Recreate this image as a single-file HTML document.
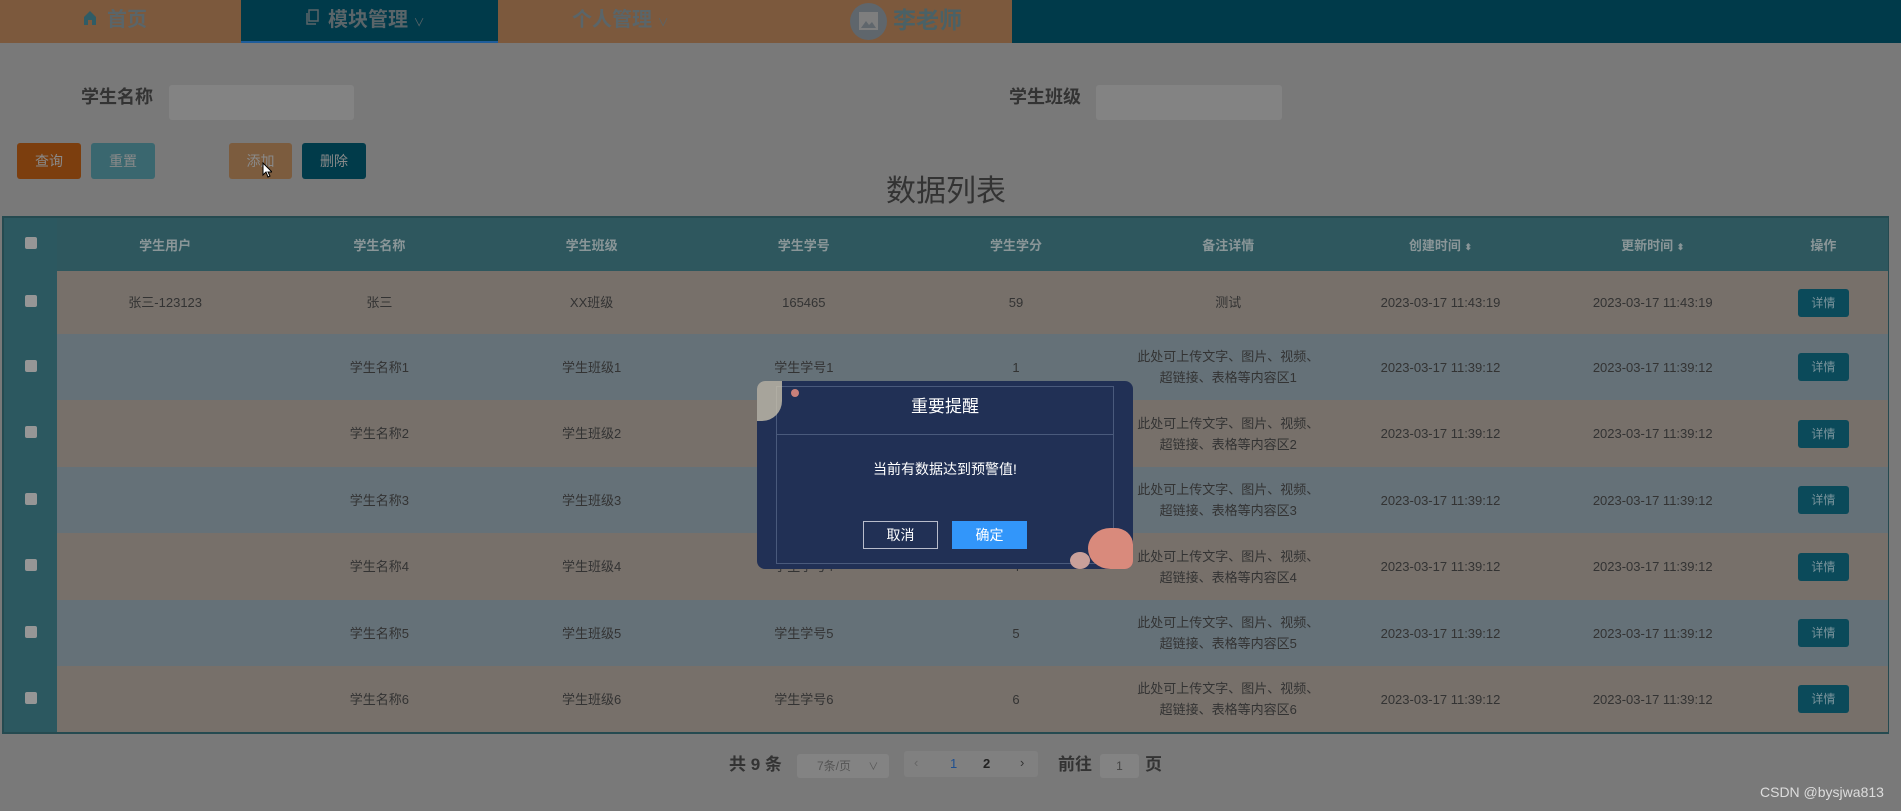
<!DOCTYPE html>
<html><head><meta charset="utf-8"><style>
*{margin:0;padding:0;box-sizing:border-box}
body{width:1901px;height:811px;overflow:hidden;background:#797979;font-family:"Liberation Sans","Noto Sans CJK SC",sans-serif;position:relative}
.a{position:absolute}
.nav{left:0;top:0;width:1012px;height:43px;background:#7c593d}
.navr{left:1012px;top:0;width:889px;height:43px;background:#003a4a}
.tab{left:241px;top:0;width:257px;height:43px;background:#003a4a;border-bottom:2px solid #1f5d9a}
.nt{font-size:20px;font-weight:bold;color:#5a6569;top:5px;line-height:30px}
.lbl{font-size:18px;font-weight:bold;color:#333;line-height:24px}
.inp{background:#838383;border-radius:3px}
.btn{top:143px;height:36px;border-radius:3px;color:#8a8a8a;font-size:14px;text-align:center;line-height:36px}
table{border-collapse:collapse;width:1884px;table-layout:fixed}
td,th{text-align:center;font-size:13px;color:#333}
th{height:53px;background:#2e575e;color:#8a9698;font-weight:bold}
tr.b td{background:#77706a}
tr.g td{background:#657178}
td.c,th.c{background:#2c5860 !important}
.cb{display:inline-block;width:12px;height:12px;background:#969696;border-radius:2px}
.det{display:inline-block;width:51px;height:28px;line-height:28px;background:#0b4a5a;color:#7a949c;font-size:12px;border-radius:3px}
td{line-height:21px}
</style></head><body>
<div class="a nav"></div><div class="a navr"></div><div class="a tab"></div>
<svg class="a" style="left:83px;top:10px" width="14" height="16" viewBox="0 0 14 16"><path d="M7 1L1 7v8h4v-5h4v5h4V7z" fill="#2f5c66"/></svg>
<div class="a nt" style="left:107px">首页</div>
<svg class="a" style="left:304px;top:9px" width="16" height="18" viewBox="0 0 16 18"><rect x="5" y="1" width="9" height="11" fill="none" stroke="#5a6569" stroke-width="1.5"/><path d="M3 4v11h9" fill="none" stroke="#5a6569" stroke-width="1.5"/></svg>
<div class="a nt" style="left:328px">模块管理 <span style="font-size:11px;font-weight:normal">∨</span></div>
<div class="a nt" style="left:572px">个人管理 <span style="font-size:11px;font-weight:normal">∨</span></div>
<div class="a" style="left:850px;top:3px;width:37px;height:37px;border-radius:50%;background:#5f666c"></div>
<svg class="a" style="left:858px;top:11px" width="21" height="20" viewBox="0 0 21 20"><rect x="1" y="1" width="19" height="18" fill="#7e7e7e"/><path d="M3 17l5-7 3 4 3-3 4 6z" fill="#5f666c"/></svg>
<div class="a nt" style="left:893px;top:5px;font-size:23px;color:#4a6166">李老师</div>

<div class="a lbl" style="left:81px;top:85px">学生名称</div>
<div class="a inp" style="left:169px;top:85px;width:185px;height:35px"></div>
<div class="a lbl" style="left:1009px;top:85px">学生班级</div>
<div class="a inp" style="left:1096px;top:85px;width:186px;height:35px"></div>

<div class="a btn" style="left:17px;width:64px;background:#7c3e0e">查询</div>
<div class="a btn" style="left:91px;width:64px;background:#3a676f">重置</div>
<div class="a btn" style="left:229px;width:63px;background:#7c5c3e">添加</div>
<div class="a btn" style="left:302px;width:64px;background:#013b4a">删除</div>
<svg class="a" style="left:262px;top:162px" width="10" height="16" viewBox="0 0 10 16"><path d="M1 1v12l3-3 2 5 2-1-2-4h4z" fill="#fff" stroke="#000" stroke-width="1"/></svg>
<div class="a" style="left:846px;top:174px;width:200px;text-align:center;font-size:30px;color:#333;line-height:36px">数据列表</div>

<div class="a" style="left:2px;top:216px;border:2px solid #254a50;width:1887px">
<table>
<colgroup><col style="width:53px"><col style="width:216px"><col style="width:212px"><col style="width:212px"><col style="width:212px"><col style="width:212px"><col style="width:212px"><col style="width:212px"><col style="width:212px"><col style="width:129px"></colgroup>
<tr><th class="c"><span class="cb"></span></th><th>学生用户</th><th>学生名称</th><th>学生班级</th><th>学生学号</th><th>学生学分</th><th>备注详情</th><th>创建时间 <span style="font-size:9px">⬍</span></th><th>更新时间 <span style="font-size:9px">⬍</span></th><th>操作</th></tr>
<tr class="b" style="height:63px"><td class="c"><span class="cb"></span></td><td>张三-123123</td><td>张三</td><td>XX班级</td><td>165465</td><td>59</td><td>测试</td><td>2023-03-17 11:43:19</td><td>2023-03-17 11:43:19</td><td><span class="det">详情</span></td></tr>
<tr class="g" style="height:66px"><td class="c"><span class="cb"></span></td><td></td><td>学生名称1</td><td>学生班级1</td><td>学生学号1</td><td>1</td><td>此处可上传文字、图片、视频、<br>超链接、表格等内容区1</td><td>2023-03-17 11:39:12</td><td>2023-03-17 11:39:12</td><td><span class="det">详情</span></td></tr>
<tr class="b" style="height:67px"><td class="c"><span class="cb"></span></td><td></td><td>学生名称2</td><td>学生班级2</td><td>学生学号2</td><td>2</td><td>此处可上传文字、图片、视频、<br>超链接、表格等内容区2</td><td>2023-03-17 11:39:12</td><td>2023-03-17 11:39:12</td><td><span class="det">详情</span></td></tr>
<tr class="g" style="height:66px"><td class="c"><span class="cb"></span></td><td></td><td>学生名称3</td><td>学生班级3</td><td>学生学号3</td><td>3</td><td>此处可上传文字、图片、视频、<br>超链接、表格等内容区3</td><td>2023-03-17 11:39:12</td><td>2023-03-17 11:39:12</td><td><span class="det">详情</span></td></tr>
<tr class="b" style="height:67px"><td class="c"><span class="cb"></span></td><td></td><td>学生名称4</td><td>学生班级4</td><td>学生学号4</td><td>4</td><td>此处可上传文字、图片、视频、<br>超链接、表格等内容区4</td><td>2023-03-17 11:39:12</td><td>2023-03-17 11:39:12</td><td><span class="det">详情</span></td></tr>
<tr class="g" style="height:66px"><td class="c"><span class="cb"></span></td><td></td><td>学生名称5</td><td>学生班级5</td><td>学生学号5</td><td>5</td><td>此处可上传文字、图片、视频、<br>超链接、表格等内容区5</td><td>2023-03-17 11:39:12</td><td>2023-03-17 11:39:12</td><td><span class="det">详情</span></td></tr>
<tr class="b" style="height:66px"><td class="c"><span class="cb"></span></td><td></td><td>学生名称6</td><td>学生班级6</td><td>学生学号6</td><td>6</td><td>此处可上传文字、图片、视频、<br>超链接、表格等内容区6</td><td>2023-03-17 11:39:12</td><td>2023-03-17 11:39:12</td><td><span class="det">详情</span></td></tr>
</table></div>

<div class="a" style="left:757px;top:381px;width:376px;height:188px;background:#213055;border-radius:8px"></div>
<div class="a" style="left:776px;top:386px;width:338px;height:178px;border:1px solid #4a5a7c"></div>
<div class="a" style="left:776px;top:434px;width:338px;border-top:1px solid #4a5a7c"></div>
<div class="a" style="left:757px;top:395px;width:376px;text-align:center;color:#fff;font-size:17px;line-height:24px">重要提醒</div>
<div class="a" style="left:757px;top:459px;width:376px;text-align:center;color:#fff;font-size:14px;line-height:20px">当前有数据达到预警值!</div>
<div class="a" style="left:863px;top:521px;width:75px;height:28px;border:1px solid #b8bccb;color:#fff;font-size:14px;text-align:center;line-height:26px">取消</div>
<div class="a" style="left:952px;top:521px;width:75px;height:28px;background:#3296fa;color:#fff;font-size:14px;text-align:center;line-height:28px">确定</div>
<div class="a" style="left:757px;top:381px;width:25px;height:40px;background:#c9c2ad;border-radius:8px 0 20px 0;opacity:.8"></div>
<div class="a" style="left:791px;top:389px;width:8px;height:8px;background:#c9807a;border-radius:50%"></div>
<div class="a" style="left:1088px;top:528px;width:45px;height:41px;background:#d98a7c;border-radius:50% 40% 8px 50%"></div>
<div class="a" style="left:1070px;top:552px;width:20px;height:17px;background:#c9a09a;border-radius:50%"></div>

<div class="a" style="left:729px;top:753px;font-size:17px;font-weight:bold;color:#333;line-height:24px">共 9 条</div>
<div class="a" style="left:797px;top:754px;width:92px;height:24px;background:#838383;border-radius:3px;font-size:12px;color:#555;line-height:24px;padding-left:20px">7条/页 <span style="margin-left:14px;font-size:10px">∨</span></div>
<div class="a" style="left:904px;top:751px;width:134px;height:26px;background:#808080;border-radius:3px"></div>
<div class="a" style="left:914px;top:755px;font-size:13px;color:#666">‹</div>
<div class="a" style="left:950px;top:756px;font-size:13px;color:#1f4f8f">1</div>
<div class="a" style="left:983px;top:756px;font-size:13px;color:#222;font-weight:bold">2</div>
<div class="a" style="left:1020px;top:755px;font-size:13px;color:#333">›</div>
<div class="a" style="left:1058px;top:753px;font-size:17px;font-weight:bold;color:#333;line-height:24px">前往</div>
<div class="a" style="left:1100px;top:754px;width:39px;height:24px;background:#838383;border-radius:3px;font-size:12px;color:#444;text-align:center;line-height:24px">1</div>
<div class="a" style="left:1145px;top:753px;font-size:17px;font-weight:bold;color:#333;line-height:24px">页</div>
<div class="a" style="left:1760px;top:784px;font-size:14px;color:#ddd">CSDN @bysjwa813</div>
</body></html>
